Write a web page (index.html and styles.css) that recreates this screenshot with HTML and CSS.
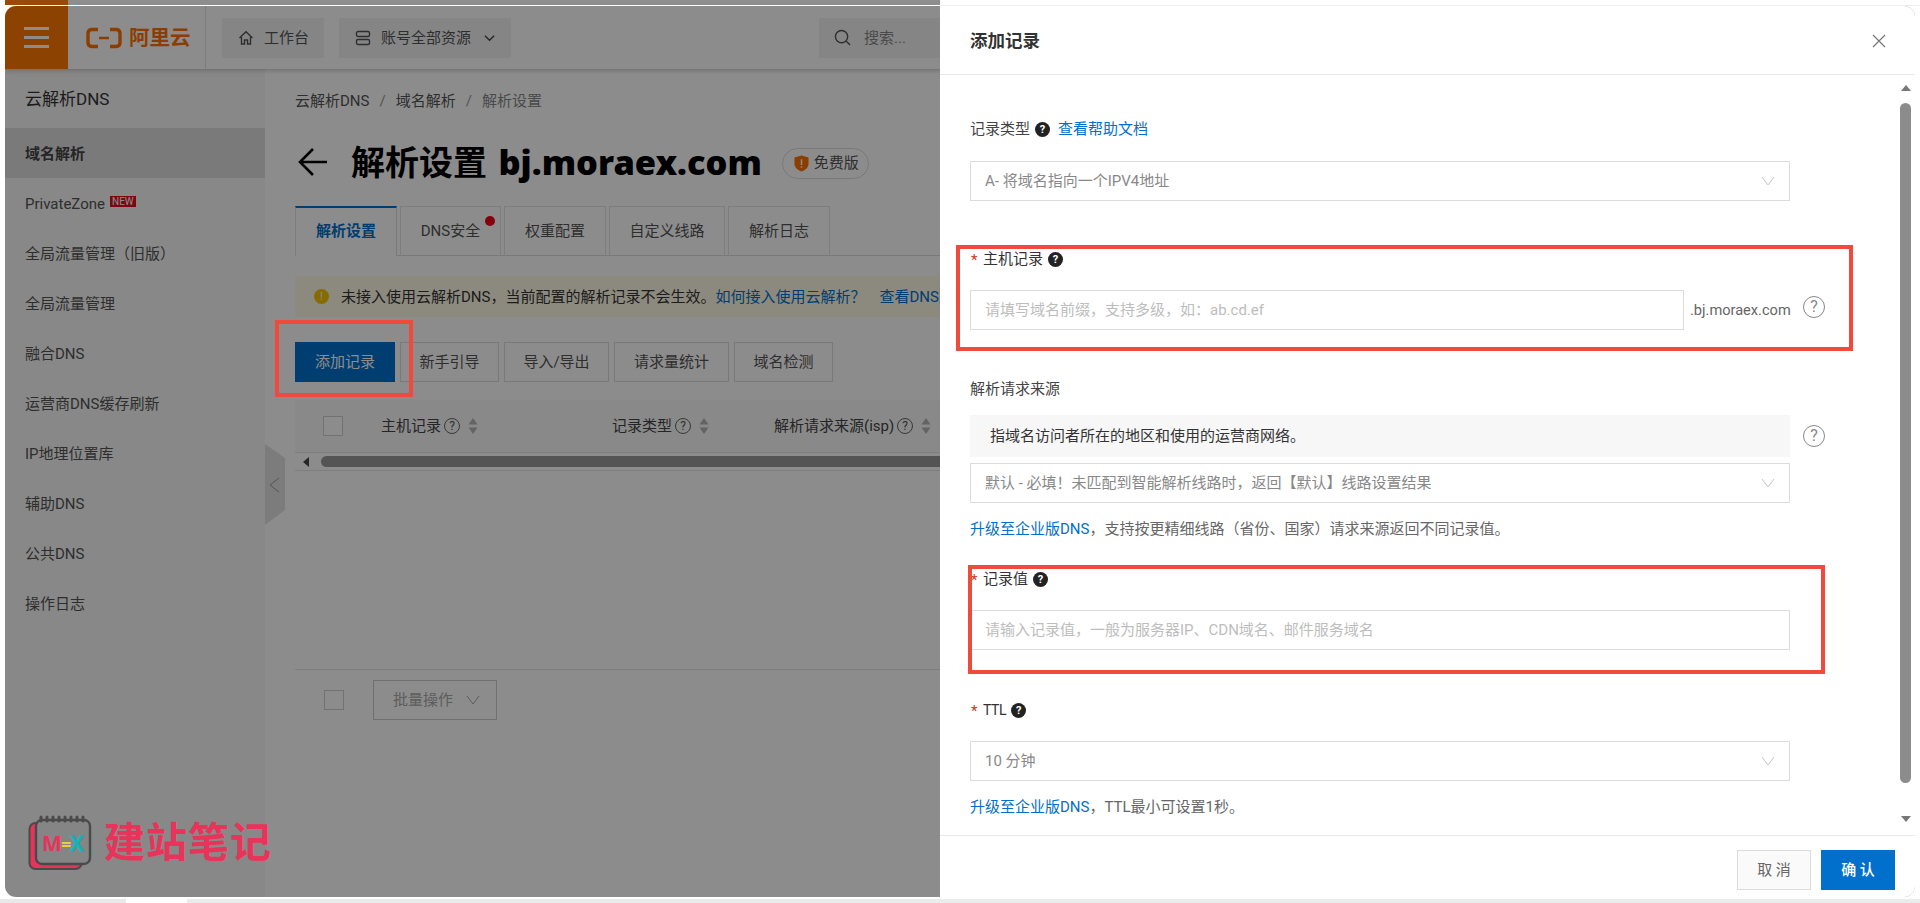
FILE: index.html
```html
<!DOCTYPE html>
<html lang="zh-CN">
<head>
<meta charset="utf-8">
<title>解析设置 bj.moraex.com</title>
<link rel="stylesheet" href="styles.css">
</head>
<body>
<svg class="defs" width="0" height="0" aria-hidden="true">
  <symbol id="chev" viewBox="0 0 14 10"><path d="M1 1l6 8 6-8" fill="none" stroke="currentColor" stroke-width="1"/></symbol>
  <symbol id="sort" viewBox="0 0 10 18"><path d="M5 1l4.500 6.500H.5zM5 17l4.500-6.500H.5z" fill="currentColor"/></symbol>
</svg>
<div class="page">
  <div class="peek"><i class="peek-a"></i><i class="peek-b"></i><i class="peek-c"></i><i class="peek-d"></i></div>
  <div class="hairline"><i class="hair-l"></i><i class="hair-r"></i></div>
  <div class="window">
    <div class="app">
      <header class="topbar">
        <div class="burger"><i></i><i></i><i></i></div>
        <div class="brand">
          <svg class="brand-mark" viewBox="0 0 36 22" width="36" height="22"><path d="M12 2.500H6Q2 2.500 2 6.500v9Q2 19.500 6 19.500h6M24 2.500h6q4 0 4 4v9q0 4-4 4h-6" fill="none" stroke="#ff7000" stroke-width="3.400"/><path d="M13 11h10" stroke="#ff7000" stroke-width="2.400"/></svg>
          <span class="brand-name">阿里云</span>
        </div>
        <div class="topbtn work">
          <svg viewBox="0 0 16 16" width="16" height="16"><path d="M1.500 8L8 1.800 14.500 8M3.500 7v7h3v-4h3v4h3V7" fill="none" stroke="#555" stroke-width="1.400"/></svg>
          <span>工作台</span>
        </div>
        <div class="topbtn res">
          <svg viewBox="0 0 16 16" width="16" height="16"><rect x="1.500" y="1.500" width="13" height="5" rx="1.500" fill="none" stroke="#555" stroke-width="1.400"/><rect x="1.500" y="9.500" width="13" height="5" rx="1.500" fill="none" stroke="#555" stroke-width="1.400"/></svg>
          <span>账号全部资源</span>
          <svg class="down" viewBox="0 0 12 8" width="11" height="8"><path d="M1 1.500l5 5 5-5" fill="none" stroke="#444" stroke-width="1.500"/></svg>
        </div>
        <div class="topsearch">
          <svg viewBox="0 0 18 18" width="17" height="17"><circle cx="8" cy="8" r="6.500" fill="none" stroke="#555" stroke-width="1.500"/><path d="M13 13l4 4" stroke="#555" stroke-width="1.500"/></svg>
          <span>搜索...</span>
        </div>
      </header>
      <div class="content">
        <aside class="side">
          <div class="side-title">云解析DNS</div>
          <ul class="side-list">
            <li class="on">域名解析</li>
            <li>PrivateZone<b class="new">NEW</b></li>
            <li>全局流量管理（旧版）</li>
            <li>全局流量管理</li>
            <li>融合DNS</li>
            <li>运营商DNS缓存刷新</li>
            <li>IP地理位置库</li>
            <li>辅助DNS</li>
            <li>公共DNS</li>
            <li>操作日志</li>
          </ul>
          <svg class="collapse" viewBox="0 0 20 82" width="20" height="82"><path d="M0 0l20 14v52L0 81z" fill="#e2e2e2"/><path d="M14 34l-9 7 9 7" fill="none" stroke="#999" stroke-width="1"/></svg>
        </aside>
        <main class="main">
          <nav class="crumbs"><span>云解析DNS</span><i>/</i><span>域名解析</span><i>/</i><span class="cur">解析设置</span></nav>
          <div class="title-row">
            <svg class="back" viewBox="0 0 30 30" width="30" height="30"><path d="M29 15H2M15 2L2 15l13 13" fill="none" stroke="#000" stroke-width="2.600"/></svg>
            <h1>解析设置 <span>bj.moraex.com</span></h1>
            <div class="plan">
              <svg viewBox="0 0 16 18" width="15" height="17"><path d="M8 .5l7.500 2v6.500c0 4.500-3.500 7-7.500 8.500C4 16 .5 13.500.5 9V2.500z" fill="#ff7000"/><path d="M8 4.500v6M8 12v1.500" stroke="#fff" stroke-width="1.600"/></svg>
              <span>免费版</span>
            </div>
          </div>
          <div class="tabs">
            <div class="tab active t1">解析设置</div>
            <div class="tab t2">DNS安全<i class="dot"></i></div>
            <div class="tab t3">权重配置</div>
            <div class="tab t4">自定义线路</div>
            <div class="tab t5">解析日志</div>
          </div>
          <div class="notice">
            <i class="warn">!</i>
            <span>未接入使用云解析DNS，当前配置的解析记录不会生效。</span><a class="notice-a">如何接入使用云解析？</a><a class="notice-b">查看DNS是否修改成功</a>
          </div>
          <div class="toolbar">
            <button class="btn primary b1">添加记录</button>
            <button class="btn b2">新手引导</button>
            <button class="btn b3">导入/导出</button>
            <button class="btn b4">请求量统计</button>
            <button class="btn b5">域名检测</button>
          </div>
          <div class="thead">
            <i class="check"></i>
            <div class="th c1">主机记录<i class="q">?</i><svg width="10" height="18"><use href="#sort"/></svg></div>
            <div class="th c2">记录类型<i class="q">?</i><svg width="10" height="18"><use href="#sort"/></svg></div>
            <div class="th c3">解析请求来源(isp)<i class="q">?</i><svg width="10" height="18"><use href="#sort"/></svg></div>
          </div>
          <div class="hscroll"><i class="arrow-l"></i><i class="thumb"></i></div>
          <div class="tfoot">
            <i class="check"></i>
            <div class="batch">批量操作<svg width="14" height="10"><use href="#chev"/></svg></div>
          </div>
        </main>
      </div>
    </div>
    <div class="mask"></div>
    <div class="watermark">
      <svg viewBox="0 0 64 56" width="64" height="56"><rect x="1.500" y="8" width="52" height="46" rx="6" fill="#e8335a" stroke="#4a4a4a" stroke-width="2"/><rect x="8" y="5" width="54" height="44" rx="6" fill="#858585" stroke="#4a4a4a" stroke-width="2.400"/><path d="M13 6V2M19 6V2M25 6V2M31 6V2M37 6V2M43 6V2M49 6V2M55 6V2" stroke="#4a4a4a" stroke-width="3" stroke-linecap="round"/><text x="14" y="36" class="wm-m">M</text><text x="33" y="36" class="wm-e">=</text><text x="41" y="37" class="wm-x">X</text></svg>
      <span>建站笔记</span>
    </div>
    <section class="drawer">
      <header class="dr-head">
        <h2>添加记录</h2>
        <svg viewBox="0 0 14 14" width="14" height="14"><path d="M1 1l12 12M13 1L1 13" stroke="#777" stroke-width="1.200"/></svg>
      </header>
      <div class="dr-body">
        <div class="field f-type">
          <div class="label">记录类型<i class="help">?</i><a class="help-link">查看帮助文档</a></div>
          <div class="select">A- 将域名指向一个IPV4地址<svg width="14" height="10"><use href="#chev"/></svg></div>
        </div>
        <div class="field f-host">
          <div class="label req"><b>*</b>主机记录<i class="help">?</i></div>
          <div class="row">
            <div class="input short">请填写域名前缀，支持多级，如：ab.cd.ef</div>
            <span class="suffix">.bj.moraex.com</span>
            <i class="qbig">?</i>
          </div>
        </div>
        <div class="field f-src">
          <div class="label">解析请求来源</div>
          <div class="row">
            <div class="hint">指域名访问者所在的地区和使用的运营商网络。</div>
            <i class="qbig far">?</i>
          </div>
          <div class="select gap6">默认 - 必填！未匹配到智能解析线路时，返回【默认】线路设置结果<svg width="14" height="10"><use href="#chev"/></svg></div>
          <p class="note"><a>升级至企业版DNS</a>，支持按更精细线路（省份、国家）请求来源返回不同记录值。</p>
        </div>
        <div class="field f-val">
          <div class="label req"><b>*</b>记录值<i class="help">?</i></div>
          <div class="input">请输入记录值，一般为服务器IP、CDN域名、邮件服务域名</div>
        </div>
        <div class="field f-ttl">
          <div class="label req"><b>*</b>TTL<i class="help">?</i></div>
          <div class="select">10 分钟<svg width="14" height="10"><use href="#chev"/></svg></div>
          <p class="note"><a>升级至企业版DNS</a>，TTL最小可设置1秒。</p>
        </div>
        <div class="vbar"><i class="v-up"></i><i class="v-thumb"></i><i class="v-down"></i></div>
      </div>
      <footer class="dr-foot">
        <button class="dbtn cancel">取 消</button>
        <button class="dbtn ok">确 认</button>
      </footer>
    </section>
    <i class="mark m1"></i>
    <i class="mark m2"></i>
    <i class="mark m3"></i>
  </div>
  <div class="foot"><i class="ft-a"></i><i class="ft-b"></i><i class="ft-c"></i></div>
</div>
</body>
</html>
```
FILE: styles.css
```css
* { box-sizing: border-box; }
html, body { margin: 0; height: 100%; background: #fff; overflow: hidden; }
body { font: 15px/20px Roboto, "Noto Sans CJK SC", sans-serif; color: #333; }
i { font-style: normal; }
ul { list-style: none; margin: 0; padding: 0; }
h1, h2, p { margin: 0; }
button { font: inherit; }
.defs { position: absolute; }

.page { height: 903px; display: flex; flex-direction: column; }
.peek { height: 5px; display: flex; flex: none; }
.peek-a { width: 5px; }
.peek-b { width: 63px; background: #9a4a08; }
.peek-c { width: 872px; background: #8e8e8e; }
.peek-d { flex: 1; }
.hairline { height: 1px; display: flex; flex: none; }
.hair-l { width: 940px; background: #fff; }
.hair-r { flex: 1; background: #eeeeee; }

.window { position: relative; flex: none; height: 891px; margin: 0 5px; border-radius: 11px; overflow: hidden; }
.foot { flex: 1; display: flex; padding-top: 2px; }
.ft-a { width: 126px; background: #e9e9e9; }
.ft-b { width: 61px; background: #fff; }
.ft-c { flex: 1; background: #e9ecea; }

.app { height: 100%; display: flex; flex-direction: column; background: #fff; isolation: isolate; }
.mask { position: absolute; inset: 0; background: rgba(0,0,0,.45); }

/* top bar */
.topbar { height: 63px; flex: none; display: flex; align-items: center; background: #fff; box-shadow: 0 1px 5px rgba(0,0,0,.25); position: relative; z-index: 1; }
.burger { width: 63px; height: 63px; background: #ff7800; display: flex; flex-direction: column; gap: 6px; align-items: center; justify-content: center; }
.burger i { width: 25px; height: 3px; background: #fff; }
.brand { width: 138px; height: 63px; padding-left: 18px; display: flex; align-items: center; gap: 7px; border-right: 1px solid #e2e2e2; }
.brand-name { font-size: 20.500px; font-weight: 700; color: #ff7000; }
.topbtn { height: 40px; background: #f2f3f5; display: flex; align-items: center; color: #555; }
.work { width: 102px; margin-left: 16px; padding-left: 16px; gap: 10px; }
.res { width: 172px; margin-left: 15px; padding-left: 16px; gap: 10px; }
.res .down { margin-left: 3px; }
.topsearch { width: 200px; height: 40px; margin-left: 308px; background: #f2f3f5; display: flex; align-items: center; padding-left: 15px; gap: 13px; color: #888; }

/* sidebar */
.content { flex: 1; display: flex; min-height: 0; }
.side { width: 260px; flex: none; background: #f7f7f7; position: relative; }
.side-title { height: 59px; padding: 19px 0 0 20px; font-size: 17px; line-height: 22px; color: #333; }
.side-list li { height: 50px; padding: 16px 0 0 20px; color: #555; white-space: nowrap; }
.side-list li.on { background: #dfdfdf; font-weight: 700; color: #444; }
.new { display: inline-block; margin-left: 5px; padding: 0 2px; height: 11px; line-height: 11px; font-size: 10px; font-weight: 400; background: #e0101f; color: #fff; vertical-align: 4px; }
.collapse { position: absolute; left: 260px; top: 375px; z-index: 1; }

/* main */
.main { flex: 1; min-width: 0; padding-left: 30px; background: #fff; overflow: hidden; }
.crumbs { margin-top: 22px; height: 20px; display: flex; gap: 10px; color: #555; }
.crumbs i { color: #999; }
.crumbs .cur { color: #888; }
.title-row { margin-top: 26px; height: 50px; display: flex; align-items: center; }
.back { margin-left: 3px; }
h1 { margin-left: 23px; font-size: 34px; line-height: 50px; font-weight: 700; color: #000; white-space: nowrap; }
h1 span { margin-left: 3px; font-family: "Noto Sans", sans-serif; font-size: 34.400px; font-weight: 900; }
.plan { margin-left: 20px; width: 87px; height: 31px; margin-top: 2px; border: 1px solid #ddd; border-radius: 16px; display: flex; align-items: center; padding-left: 11px; gap: 5px; color: #555; }
.tabs { margin-top: 19px; height: 50px; display: flex; border-bottom: 1px solid #ddd; }
.tab { position: relative; height: 50px; border: 1px solid #e3e3e3; border-bottom: 0; text-align: center; line-height: 48px; color: #555; white-space: nowrap; }
.tab.active { color: #0070cc; font-weight: 700; border-top: 2px solid #0070cc; background: #fff; height: 50px; line-height: 46px; border-right: 1px solid #ddd; }
.t1 { width: 102px; }
.t2 { width: 101px; margin-left: 3px; }
.t3 { width: 102px; margin-left: 3px; }
.t4 { width: 116px; margin-left: 3px; }
.t5 { width: 102px; margin-left: 3px; }
.dot { position: absolute; right: 5px; top: 9px; width: 10px; height: 10px; border-radius: 50%; background: #f00014; }
.notice { margin-top: 20px; height: 41px; background: #fffbe6; display: flex; align-items: center; padding-left: 19px; white-space: nowrap; color: #333; }
.warn { width: 15px; height: 15px; margin-right: 12px; border-radius: 50%; background: #f5c400; color: #fff; font-size: 11px; line-height: 15px; text-align: center; }
.notice-a { color: #0070cc; }
.notice-b { color: #0070cc; margin-left: 14px; }
.toolbar { margin-top: 25px; display: flex; gap: 5px; }
.btn { height: 40px; padding: 0; background: #fff; border: 1px solid #ddd; color: #555; white-space: nowrap; }
.btn.primary { background: #0070cc; border-color: #0070cc; color: #fff; }
.b1 { width: 100px; }
.b2 { width: 99px; }
.b3 { width: 105px; }
.b4 { width: 115px; }
.b5 { width: 99px; }
.thead { margin-top: 18px; height: 53px; display: flex; align-items: center; padding-left: 28px; background: #fafafa; border-bottom: 1px solid #e5e5e5; width: 1590px; }
.check { display: block; width: 20px; height: 20px; flex: none; background: #fff; border: 1px solid #d0d0d0; }
.th { display: flex; align-items: center; color: #444; white-space: nowrap; }
.th svg { color: #b5b5b5; margin-left: 8px; }
.c1 { margin-left: 38px; width: 231px; }
.c2 { width: 162px; }
.q { width: 16px; height: 16px; margin-left: 3px; border: 1px solid #666; border-radius: 50%; font-size: 12px; line-height: 14px; text-align: center; color: #555; }
.hscroll { height: 18px; width: 1590px; display: flex; align-items: center; border-bottom: 1px solid #e5e5e5; padding-left: 8px; }
.arrow-l { width: 0; height: 0; border: 5px solid transparent; border-left: 0; border-right: 6px solid #444; margin-right: 12px; }
.thumb { flex: 1; height: 11px; border-radius: 6px; background: #9a9a9a; }
.tfoot { margin-top: 198px; padding-top: 10px; border-top: 1px solid #e5e5e5; width: 1590px; display: flex; align-items: flex-start; }
.tfoot .check { margin: 10px 0 0 29px; }
.batch { margin-left: 29px; width: 124px; height: 40px; padding-left: 19px; display: flex; align-items: center; gap: 13px; border: 1px solid #ccc; color: #aaa; }
.batch svg { color: #aaa; }

/* watermark */
.watermark { position: absolute; left: 23px; top: 809px; display: flex; align-items: center; gap: 12px; }
.watermark span { font-size: 41px; line-height: 46px; font-weight: 700; color: #e8335a; letter-spacing: 1px; }
.wm-m { font: 700 21px "Noto Sans", sans-serif; fill: #e8335a; }
.wm-e { font: 700 18px "Noto Sans", sans-serif; fill: #eccb3c; }
.wm-x { font: 700 23px "Noto Sans", sans-serif; fill: #14b3b8; }

/* drawer */
.drawer { position: absolute; top: 0; right: 0; bottom: 0; width: 975px; background: #fff; display: flex; flex-direction: column; }
.dr-head { height: 69px; flex: none; border-bottom: 1px solid #e8eaea; display: flex; align-items: center; justify-content: space-between; padding: 1px 29px 0 30px; }
h2 { font-size: 17.500px; line-height: 22px; font-weight: 700; color: #333; }
.dr-body { position: relative; flex: 1; min-height: 0; padding: 44px 0 0 30px; overflow: hidden; }
.field { width: 880px; }
.label { height: 20px; display: flex; align-items: center; color: #444; margin-bottom: 22px; white-space: nowrap; }
.label.req { position: relative; padding-left: 13px; margin-bottom: 21px; color: #333; }
.label.req b { position: absolute; left: 1px; top: 1px; color: #d93026; font-weight: 400; font-size: 15px; }
.f-ttl .label { font-size: 14px; letter-spacing: -.4px; }
.help { width: 15px; height: 15px; margin-left: 5px; border-radius: 50%; background: #222; color: #fff; font-size: 11px; font-weight: 700; line-height: 15px; letter-spacing: 0; text-align: center; }
.help-link { margin-left: 8px; color: #0070cc; }
.select, .input { position: relative; width: 820px; height: 40px; border: 1px solid #dcdcdc; padding-left: 14px; line-height: 39px; white-space: nowrap; }
.select { color: #888; }
.select svg { position: absolute; right: 14px; top: 14px; color: #c4c4c4; }
.input { color: #bdbdbd; }
.input.short { width: 714px; }
.row { display: flex; align-items: center; }
.suffix { margin-left: 6px; color: #666; width: 100px; white-space: nowrap; font-size: 14.600px; }
.qbig { width: 22px; height: 22px; margin-left: 13px; margin-top: -6px; border: 1.500px solid #888; border-radius: 50%; color: #888; font-size: 16px; line-height: 19px; text-align: center; }
.qbig.far { margin-left: 13px; margin-top: 0; }
.hint { width: 820px; height: 42px; background: #f7f7f7; padding-left: 20px; line-height: 42px; color: #333; }
.gap6 { margin-top: 6px; }
.note { margin-top: 16px; height: 20px; color: #666; white-space: nowrap; }
.note a { color: #0070cc; }
.f-host { margin-top: 48px; }
.f-src { margin-top: 49px; }
.f-src .label { margin-bottom: 16px; }
.f-val { margin-top: 30px; }
.f-ttl { margin-top: 50px; }
.vbar { position: absolute; right: 4px; top: 10px; bottom: 8px; width: 11px; display: flex; flex-direction: column; align-items: center; }
.v-up { width: 0; height: 0; border: 5.500px solid transparent; border-top: 0; border-bottom: 6px solid #777; }
.v-thumb { margin-top: 12px; width: 11px; height: 680px; border-radius: 6px; background: #8c8c8c; }
.v-down { margin-top: 33px; width: 0; height: 0; border: 5px solid transparent; border-bottom: 0; border-top: 6px solid #777; }
.dr-foot { height: 62px; flex: none; border-top: 1px solid #e8eaea; display: flex; justify-content: flex-end; gap: 10px; padding: 14px 20px 0 0; }
.dbtn { width: 74px; height: 40px; padding: 0; white-space: nowrap; }
.cancel { background: #fafafa; border: 1px solid #dcdcdc; color: #666; }
.ok { background: #0070cc; border: 1px solid #0070cc; color: #fff; font-weight: 500; }

/* annotation boxes */
.mark { position: absolute; border: 4px solid #ef4a3c; pointer-events: none; }
.m1 { left: 270px; top: 314px; width: 138px; height: 77px; }
.m2 { left: 951px; top: 239px; width: 897px; height: 106px; }
.m3 { left: 963px; top: 559px; width: 857px; height: 109px; }
```
